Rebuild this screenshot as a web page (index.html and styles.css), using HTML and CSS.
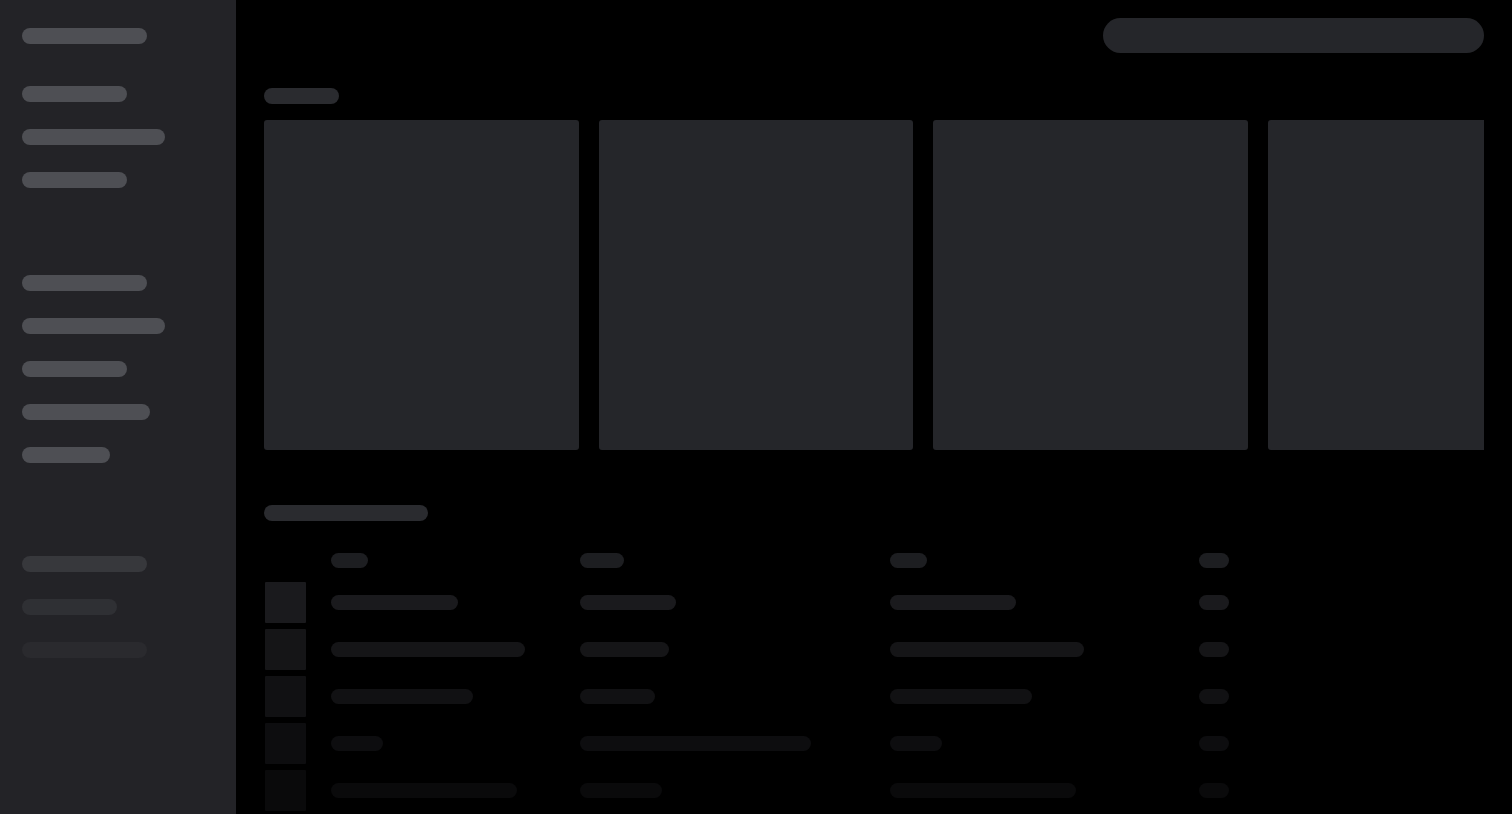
FILE: index.html
```html
<!DOCTYPE html>
<html lang="en">
<head>
<meta charset="utf-8">
<title>Loading</title>
<link rel="stylesheet" href="styles.css">
</head>
<body>
<div class="app">
  <aside class="sidebar">
    <div class="sk sk-side w125"></div>
    <div class="group g1">
      <div class="sk sk-side w105"></div>
      <div class="sk sk-side w143"></div>
      <div class="sk sk-side w105"></div>
    </div>
    <div class="group g2">
      <div class="sk sk-side w125"></div>
      <div class="sk sk-side w143"></div>
      <div class="sk sk-side w105"></div>
      <div class="sk sk-side w128"></div>
      <div class="sk sk-side w88"></div>
    </div>
    <div class="group g3">
      <div class="sk sk-side fade1 w125"></div>
      <div class="sk sk-side fade2 w95"></div>
      <div class="sk sk-side fade3 w125"></div>
    </div>
  </aside>
  <main class="main">
    <div class="topbar">
      <div class="search"></div>
    </div>
    <div class="sk sk-title t1"></div>
    <div class="cards">
      <div class="card"></div>
      <div class="card"></div>
      <div class="card"></div>
      <div class="card"></div>
    </div>
    <div class="sk sk-title t2"></div>
    <div class="table">
      <div class="trow head">
        <div></div>
        <div class="sk cell" style="width:37px"></div>
        <div class="sk cell" style="width:44px"></div>
        <div class="sk cell" style="width:37px"></div>
        <div class="sk cell" style="width:30px"></div>
      </div>
      <div class="trow r1">
        <div class="thumb"></div>
        <div class="sk cell" style="width:127px"></div>
        <div class="sk cell" style="width:96px"></div>
        <div class="sk cell" style="width:126px"></div>
        <div class="sk cell" style="width:30px"></div>
      </div>
      <div class="trow r2">
        <div class="thumb"></div>
        <div class="sk cell" style="width:194px"></div>
        <div class="sk cell" style="width:89px"></div>
        <div class="sk cell" style="width:194px"></div>
        <div class="sk cell" style="width:30px"></div>
      </div>
      <div class="trow r3">
        <div class="thumb"></div>
        <div class="sk cell" style="width:142px"></div>
        <div class="sk cell" style="width:75px"></div>
        <div class="sk cell" style="width:142px"></div>
        <div class="sk cell" style="width:30px"></div>
      </div>
      <div class="trow r4">
        <div class="thumb"></div>
        <div class="sk cell" style="width:52px"></div>
        <div class="sk cell" style="width:231px"></div>
        <div class="sk cell" style="width:52px"></div>
        <div class="sk cell" style="width:30px"></div>
      </div>
      <div class="trow r5">
        <div class="thumb"></div>
        <div class="sk cell" style="width:186px"></div>
        <div class="sk cell" style="width:82px"></div>
        <div class="sk cell" style="width:186px"></div>
        <div class="sk cell" style="width:30px"></div>
      </div>
    </div>
  </main>
</div>
</body>
</html>
```

FILE: styles.css
```css
* { box-sizing: border-box; }
html, body {
  margin: 0;
  padding: 0;
  background: #000;
  font-family: "Inter", "Liberation Sans", sans-serif;
  height: 100%;
  overflow: hidden;
}
.app {
  display: flex;
  height: 814px;
}
.sidebar {
  width: 236px;
  flex: 0 0 236px;
  background: #232327;
  padding: 28px 0 0 22px;
  display: flex;
  flex-direction: column;
}
.sk { border-radius: 999px; }
.sk-side {
  height: 16px;
  background: #4e4f54;
}
.group {
  display: flex;
  flex-direction: column;
  gap: 27px;
}
.g1 { margin-top: 42px; }
.g2 { margin-top: 87px; }
.g3 { margin-top: 93px; }
.fade1 { background: #37383c; }
.fade2 { background: #2f3034; }
.fade3 { background: #2a2a2e; }
.w125 { width: 125px; }
.w105 { width: 105px; }
.w143 { width: 143px; }
.w128 { width: 128px; }
.w88 { width: 88px; }
.w95 { width: 95px; }

.main {
  flex: 1;
  min-width: 0;
  padding: 18px 28px 0 28px;
  display: flex;
  flex-direction: column;
  overflow: hidden;
}
.topbar {
  display: flex;
  justify-content: flex-end;
}
.search {
  width: 381px;
  height: 35px;
  border-radius: 18px;
  background: #25262a;
}
.sk-title {
  height: 16px;
  background: #2a2b2f;
}
.t1 { width: 75px; margin-top: 35px; }
.t2 { width: 164px; margin-top: 55px; }
.cards {
  display: flex;
  gap: 20px;
  margin-top: 16px;
  overflow: hidden;
}
.card {
  flex: 0 0 314.5px;
  height: 330px;
  background: #25262a;
  border-radius: 3px;
}
.table {
  margin-top: 32px;
  display: flex;
  flex-direction: column;
  gap: 6px;
}
.trow {
  display: grid;
  grid-template-columns: 67px 249px 310px 309px 1fr;
  align-items: center;
}
.trow.head { margin-bottom: 8px; }
.cell { height: 15px; }
.thumb {
  width: 41px;
  height: 41px;
  margin-left: 1px;
  border-radius: 1px;
}
.head .cell { background: #1d1e21; }
.r1 .cell, .r1 .thumb { background: #1a1a1d; }
.r2 .cell, .r2 .thumb { background: #151517; }
.r3 .cell, .r3 .thumb { background: #111113; }
.r4 .cell, .r4 .thumb { background: #0d0d0f; }
.r5 .cell, .r5 .thumb { background: #0a0a0b; }
```
